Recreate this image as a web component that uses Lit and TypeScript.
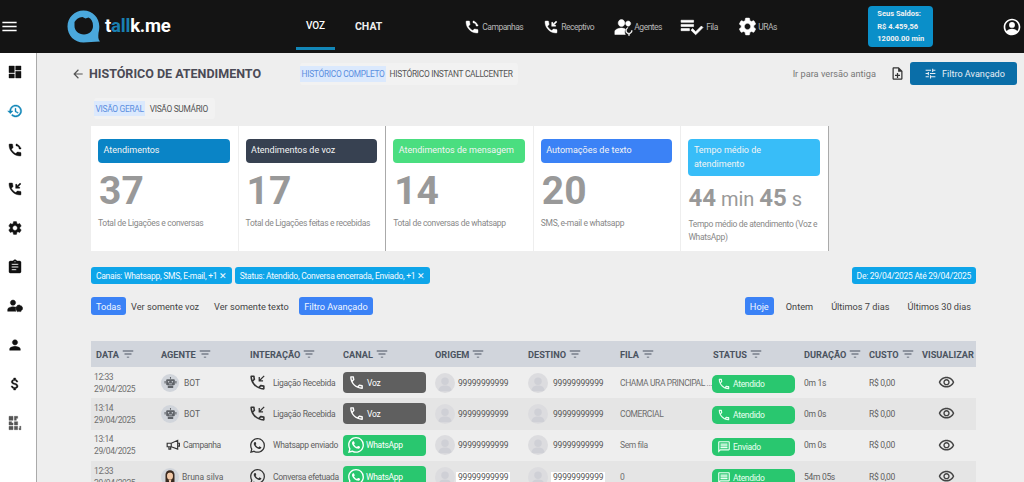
import { LitElement, html, css } from "lit";
import { customElement } from "lit/decorators.js";

const P = {
  menu: "M3 18h18v-2H3v2zm0-5h18v-2H3v2zm0-7v2h18V6H3z",
  dash: "M3 13h8V3H3v10zm0 8h8v-6H3v6zm10 0h8V11h-8v10zm0-18v6h8V3h-8z",
  hist: "M13 3c-4.97 0-9 4.03-9 9H1l3.89 3.89.07.14L9 12H6c0-3.87 3.13-7 7-7s7 3.13 7 7-3.13 7-7 7c-1.93 0-3.68-.79-4.94-2.06l-1.42 1.42C8.27 19.99 10.51 21 13 21c4.97 0 9-4.03 9-9s-4.03-9-9-9zm-1 5v5l4.28 2.54.72-1.21-3.5-2.08V8H12z",
  phoneOut: "M6.62 10.79c1.44 2.83 3.76 5.14 6.59 6.59l2.2-2.2c.27-.27.67-.36 1.02-.24 1.12.37 2.33.57 3.57.57.55 0 1 .45 1 1V20c0 .55-.45 1-1 1-9.39 0-17-7.61-17-17 0-.55.45-1 1-1h3.5c.55 0 1 .45 1 1 0 1.25.2 2.45.57 3.57.11.35.03.74-.25 1.02l-2.2 2.2z M13.5 3h2v1.2c2.3.4 4 2.1 4.3 4.3H21v2h-3v-1c0-2-1.6-3.6-3.6-3.6h-.9V3z",
  phoneIn: "M6.62 10.79c1.44 2.83 3.76 5.14 6.59 6.59l2.2-2.2c.27-.27.67-.36 1.02-.24 1.12.37 2.33.57 3.57.57.55 0 1 .45 1 1V20c0 .55-.45 1-1 1-9.39 0-17-7.61-17-17 0-.55.45-1 1-1h3.5c.55 0 1 .45 1 1 0 1.25.2 2.45.57 3.57.11.35.03.74-.25 1.02l-2.2 2.2z M21 4.41 19.59 3 15 7.59V5h-2v6h6V9h-2.59z",
  phoneLine: "M6.54 5c.06.89.21 1.76.45 2.59l-1.2 1.2c-.41-1.2-.67-2.47-.76-3.79h1.51m9.86 12.02c.85.24 1.72.39 2.6.45v1.49c-1.32-.09-2.59-.35-3.8-.75l1.2-1.19M7.5 3H4c-.55 0-1 .45-1 1 0 9.39 7.61 17 17 17 .55 0 1-.45 1-1v-3.49c0-.55-.45-1-1-1-1.24 0-2.45-.2-3.57-.57-.1-.04-.21-.05-.31-.05-.26 0-.51.1-.71.29l-2.2 2.2c-2.83-1.45-5.15-3.76-6.59-6.59l2.2-2.2c.28-.28.36-.67.25-1.02C8.7 6.45 8.5 5.25 8.5 4c0-.55-.45-1-1-1z",
  phoneLineIn: "M6.54 5c.06.89.21 1.76.45 2.59l-1.2 1.2c-.41-1.2-.67-2.47-.76-3.79h1.51m9.86 12.02c.85.24 1.72.39 2.6.45v1.49c-1.32-.09-2.59-.35-3.8-.75l1.2-1.19M7.5 3H4c-.55 0-1 .45-1 1 0 9.39 7.61 17 17 17 .55 0 1-.45 1-1v-3.49c0-.55-.45-1-1-1-1.24 0-2.45-.2-3.57-.57-.1-.04-.21-.05-.31-.05-.26 0-.51.1-.71.29l-2.2 2.2c-2.83-1.45-5.15-3.76-6.59-6.59l2.2-2.2c.28-.28.36-.67.25-1.02C8.7 6.45 8.5 5.25 8.5 4c0-.55-.45-1-1-1z M21 4.1 19.9 3 15 7.9V5h-1.6v5.6H19V9h-2.9z",
  gear: "M19.14 12.94c.04-.3.06-.61.06-.94 0-.32-.02-.64-.07-.94l2.03-1.58c.18-.14.23-.41.12-.61l-1.92-3.32c-.12-.22-.37-.29-.59-.22l-2.39.96c-.5-.38-1.03-.7-1.62-.94l-.36-2.54c-.04-.24-.24-.41-.48-.41h-3.84c-.24 0-.43.17-.47.41l-.36 2.54c-.59.24-1.13.57-1.62.94l-2.39-.96c-.22-.08-.47 0-.59.22L2.74 8.87c-.12.21-.08.47.12.61l2.03 1.58c-.05.3-.09.63-.09.94s.02.64.07.94l-2.03 1.58c-.18.14-.23.41-.12.61l1.92 3.32c.12.22.37.29.59.22l2.39-.96c.5.38 1.03.7 1.62.94l.36 2.54c.05.24.24.41.48.41h3.84c.24 0 .44-.17.47-.41l.36-2.54c.59-.24 1.13-.56 1.62-.94l2.39.96c.22.08.47 0 .59-.22l1.92-3.32c.12-.22.07-.47-.12-.61l-2.01-1.58zM12 15.6c-1.98 0-3.6-1.62-3.6-3.6s1.62-3.6 3.6-3.6 3.6 1.62 3.6 3.6-1.62 3.6-3.6 3.6z",
  clip: "M19 3h-4.18C14.4 1.84 13.3 1 12 1c-1.3 0-2.4.84-2.82 2H5c-1.1 0-2 .9-2 2v14c0 1.1.9 2 2 2h14c1.1 0 2-.9 2-2V5c0-1.1-.9-2-2-2zm-7 0c.55 0 1 .45 1 1s-.45 1-1 1-1-.45-1-1 .45-1 1-1zm2 14H7v-2h7v2zm3-4H7v-2h10v2zm0-4H7V7h10v2z",
  person: "M12 12c2.21 0 4-1.79 4-4s-1.79-4-4-4-4 1.79-4 4 1.79 4 4 4zm0 2c-2.67 0-8 1.34-8 4v2h16v-2c0-2.66-5.33-4-8-4z",
  dollar: "M11.8 10.9c-2.27-.59-3-1.2-3-2.15 0-1.09 1.01-1.85 2.7-1.85 1.78 0 2.44.85 2.5 2.1h2.21c-.07-1.72-1.12-3.3-3.21-3.81V3h-3v2.16c-1.94.42-3.5 1.68-3.5 3.61 0 2.31 1.91 3.46 4.7 4.13 2.5.6 3 1.48 3 2.41 0 .69-.49 1.79-2.7 1.79-2.06 0-2.87-.92-2.98-2.1h-2.2c.12 2.19 1.76 3.42 3.68 3.83V21h3v-2.15c1.95-.37 3.5-1.5 3.5-3.55 0-2.84-2.43-3.81-4.7-4.4z",
  agents: "M9 11.5c2.2 0 4-1.9 4-4.2S11.2 3 9 3 5 5 5 7.3s1.8 4.2 4 4.2zm0 1.8c-3 0-8 1.5-8 4.2V21h12.6c-.5-1-.8-2-.8-3.2 0-1.2.3-2.3.9-3.2-1.6-.9-3.5-1.3-4.7-1.3zM17 11c1.7 0 3-1.4 3-3.1S18.7 4.8 17 4.8 14 6.2 14 7.9 15.3 11 17 11zm-.3 1.6c-1.9.4-3 2.6-2.6 4.7.4 1.7 1.8 2.9 3.4 3v2h1v-2c2-.3 3.4-2 3.4-4h-1c0 1.7-1.3 3.1-3 3.1s-3-1.4-3-3.1 1-2.8 2-3.2z",
  people: "M9 11c2.2 0 4-1.8 4-4s-1.8-4-4-4-4 1.8-4 4 1.8 4 4 4zm0 2c-3 0-8 1.5-8 4.2V20h12.5c-.4-.9-.6-1.9-.6-3 0-1.2.3-2.3.8-3.2C12 13.3 10.3 13 9 13zm8.5-2.5a2.5 2.5 0 0 1 0 5 2.5 2.5 0 0 1 0-5zM23 17.5l-1.5.7-.3 1.8-1.7.8-1.5-.8-1.7.8-1.5-1-.5-1.8-1.2-1.2.7-1.6-.3-1.7 1.5-.8.8-1.6 1.7.2 1.5-.7 1.3 1.1 1.7.2.5 1.6 1.2 1.2z",
  fila: "M14 10H2v2h12v-2zm0-4H2v2h12V6zM2 16h8v-2H2v2zm19.5-4.5L23 13l-6.99 7-4.51-4.5L13 14l3.01 3 5.49-5.5z",
  user: "M12 2C6.48 2 2 6.48 2 12s4.48 10 10 10 10-4.48 10-10S17.52 2 12 2zm0 2c4.4 0 8 3.6 8 8 0 1.8-.6 3.5-1.7 4.9-1.4-1.9-4.3-2.9-6.3-2.9s-4.9 1-6.3 2.9C4.6 15.5 4 13.8 4 12c0-4.4 3.6-8 8-8zm0 2a3.5 3.5 0 1 0 0 7 3.5 3.5 0 0 0 0-7z",
  arrow: "M20 11H7.83l5.59-5.59L12 4l-8 8 8 8 1.41-1.41L7.83 13H20v-2z",
  noteAdd: "M14 2H6c-1.1 0-2 .9-2 2v16c0 1.1.9 2 2 2h12c1.1 0 2-.9 2-2V8l-6-6zm4 18H6V4h7v5h5v11zM11 11h2v3h3v2h-3v3h-2v-3H8v-2h3v-3z",
  tune: "M3 17v2h6v-2H3zM3 5v2h10V5H3zm10 16v-2h8v-2h-8v-2h-2v6h2zM7 9v2H3v2h4v2h2V9H7zm14 4v-2H11v2h10zm-6-4h2V7h4V5h-4V3h-2v6z",
  filter: "M10 18h4v-1.5h-4V18zM3 6v1.5h18V6H3zm3 6.7h12v-1.5H6v1.5z",
  eye: "M12 6c3.79 0 7.17 2.13 8.82 5.5C19.17 14.87 15.79 17 12 17s-7.17-2.13-8.82-5.5C4.83 8.13 8.21 6 12 6m0-2C7 4 2.73 7.11 1 11.5 2.73 15.89 7 19 12 19s9.27-3.11 11-7.5C21.27 7.11 17 4 12 4zm0 5c1.38 0 2.5 1.12 2.5 2.5S13.38 14 12 14s-2.5-1.12-2.5-2.5S10.62 9 12 9m0-2c-2.48 0-4.5 2.02-4.5 4.5S9.52 16 12 16s4.5-2.02 4.5-4.5S14.48 7 12 7z",
  chat: "M20 2H4c-1.1 0-2 .9-2 2v18l4-4h14c1.1 0 2-.9 2-2V4c0-1.1-.9-2-2-2zm0 14H5.17L4 17.17V4h16v12zM6 12h12v2H6zm0-3h12v2H6zm0-3h12v2H6z",
  wa: "M17.472 14.382c-.297-.149-1.758-.867-2.03-.967-.273-.099-.471-.148-.67.15-.197.297-.767.966-.94 1.164-.173.199-.347.223-.644.075-.297-.15-1.255-.463-2.39-1.475-.883-.788-1.48-1.761-1.653-2.059-.173-.297-.018-.458.13-.606.134-.133.298-.347.446-.52.149-.174.198-.298.298-.497.099-.198.05-.371-.025-.52-.075-.149-.669-1.612-.916-2.207-.242-.579-.487-.5-.669-.51-.173-.008-.371-.01-.57-.01-.198 0-.52.074-.792.372-.272.297-1.04 1.016-1.04 2.479 0 1.462 1.065 2.875 1.213 3.074.149.198 2.096 3.2 5.077 4.487.709.306 1.262.489 1.694.625.712.227 1.36.195 1.871.118.571-.085 1.758-.719 2.006-1.413.248-.694.248-1.289.173-1.413-.074-.124-.272-.198-.57-.347m-5.421 7.403h-.004a9.87 9.87 0 01-5.031-1.378l-.361-.214-3.741.982.998-3.648-.235-.374a9.86 9.86 0 01-1.51-5.26c.001-5.45 4.436-9.884 9.888-9.884 2.64 0 5.122 1.03 6.988 2.898a9.825 9.825 0 012.893 6.994c-.003 5.45-4.437 9.884-9.885 9.884m8.413-18.297A11.815 11.815 0 0012.05 0C5.495 0 .16 5.335.157 11.892c0 2.096.547 4.142 1.588 5.945L.057 24l6.305-1.654a11.882 11.882 0 005.683 1.448h.005c6.554 0 11.89-5.335 11.893-11.893a11.821 11.821 0 00-3.48-8.413z",
  qr: "M3 2h6v6H3zM11 2h5v3h-2v3h-3zM3 10h4v2h2v3H3zM11 10h5v5h-5zM3 17h6v5H3zM11 17h5v5h-5zM19 17h2v2h-2zM18 20h3v2h-3z",
};

const ico = (d: string, size: number, cls = "") =>
  html`<svg class="ico ${cls}" width=${size} height=${size} viewBox="0 0 24 24" fill="currentColor"><path d=${d}></path></svg>`;

const robot = html`<svg class="glyph" width="13" height="13" viewBox="0 0 24 24" fill="#5f6368"><path d="M11 2h2v3h-2zM6 6h12a2 2 0 0 1 2 2v7a2 2 0 0 1-2 2H6a2 2 0 0 1-2-2V8a2 2 0 0 1 2-2zm2.500 3a1.500 1.500 0 1 0 0 3 1.500 1.500 0 0 0 0-3zm7 0a1.500 1.500 0 1 0 0 3 1.500 1.500 0 0 0 0-3zM9 14v1h6v-1zM1 9h2v5H1zM21 9h2v5h-2zM7 18h10v4H7z"></path></svg>`;

const silhouette = html`<svg class="glyph" width="20" height="20" viewBox="0 0 24 24" fill="#cfd0d6"><circle cx="12" cy="10" r="4.500"></circle><path d="M4 22c0-5 3.500-7 8-7s8 2 8 7z"></path></svg>`;

const woman = html`<svg class="glyph" width="18" height="18" viewBox="0 0 24 24"><path d="M6 24V9a6 6 0 0 1 12 0v15z" fill="#3b2a20"></path><ellipse cx="12" cy="10.500" rx="4" ry="5" fill="#f2c9a8"></ellipse><path d="M8 8c2-2.500 6-2.500 8 0V5H8z" fill="#3b2a20"></path><path d="M7 24c0-5 2-7 5-7s5 2 5 7z" fill="#111"></path><path d="M10.500 16h3v3h-3z" fill="#f2c9a8"></path></svg>`;

const megaphone = html`<svg class="glyph" width="14" height="14" viewBox="0 0 24 24" fill="none" stroke="#333" stroke-width="2"><path d="M2 9h7l11-5v15L9 15H2zM9 9v6M5 15v4h3v-4M20 9h3v5h-3"></path></svg>`;

const sideIcons = [P.dash, P.hist, P.phoneOut, P.phoneIn, P.gear, P.clip, P.people, P.person, P.dollar, P.qr];

const navItems = [
  { d: P.phoneOut, size: 16, label: "Campanhas" },
  { d: P.phoneIn, size: 16, label: "Receptivo" },
  { d: P.agents, size: 20, label: "Agentes" },
  { d: P.fila, size: 25, label: "Fila" },
  { d: P.gear, size: 21, label: "URAs" },
];

const cards = [
  { tone: "c1", title: "Atendimentos", n: "37", desc: "Total de Ligações e conversas" },
  { tone: "c2", title: "Atendimentos de voz", n: "17", desc: "Total de Ligações feitas e recebidas", strong: true },
  { tone: "c3", title: "Atendimentos de mensagem", n: "14", desc: "Total de conversas de whatsapp" },
  { tone: "c4", title: "Automações de texto", n: "20", desc: "SMS, e-mail e whatsapp" },
];

const heads = ["DATA", "AGENTE", "INTERAÇÃO", "CANAL", "ORIGEM", "DESTINO", "FILA", "STATUS", "DURAÇÃO", "CUSTO", "VISUALIZAR"];

const rows = [
  { time: "12:33", agent: "BOT", av: "bot", icon: P.phoneLineIn, line: true, inter: "Ligação Recebida", ch: "voz", fila: "CHAMA URA PRINCIPAL ...", st: "Atendido", stIcon: P.phoneLine, dur: "0m 1s" },
  { time: "13:14", agent: "BOT", av: "bot", icon: P.phoneLineIn, line: true, inter: "Ligação Recebida", ch: "voz", fila: "COMERCIAL", st: "Atendido", stIcon: P.phoneLine, dur: "0m 0s" },
  { time: "13:14", agent: "Campanha", av: "mega", icon: P.wa, inter: "Whatsapp enviado", ch: "wa", fila: "Sem fila", st: "Enviado", stIcon: P.chat, dur: "0m 0s" },
  { time: "12:33", agent: "Bruna silva", av: "woman", icon: P.wa, inter: "Conversa efetuada", ch: "wa", fila: "0", st: "Atendido", stIcon: P.chat, dur: "54m 05s", mark: true },
];

@customElement("app-root")
export class AppRoot extends LitElement {
  static styles = css`
    :host { display: block; width: 1024px; height: 482px; overflow: hidden; background: #eeeeee; font-family: Roboto, "Liberation Sans", sans-serif; color: #444; }
    .ico { display: block; flex: none; }
    header { height: 53px; box-sizing: border-box; background: #141414; color: #fff; display: flex; align-items: center; }
    .burger { width: 67px; flex: none; }
    .logo { width: 229px; flex: none; display: flex; align-items: center; gap: 4px; }
    .wordmark { font-size: 18.500px; font-weight: 700; letter-spacing: -0.2px; color: #fff; padding-bottom: 1px; }
    .wordmark span { color: #1a7fb0; }
    .tab { align-self: stretch; display: flex; align-items: center; justify-content: center; font-size: 10px; font-weight: 500; box-sizing: border-box; }
    .tab.voz { width: 39px; margin-bottom: 3px; padding-top: 3px; border-bottom: 3px solid #1287b8; }
    .tab.chat { margin-left: 20px; font-weight: 700; font-size: 10.500px; color: #eee; padding-bottom: 1px; }
    .nav { margin-left: 82px; display: grid; grid-template-columns: 79px 71px 65px 58px 39px; }
    .nav div { display: flex; align-items: center; gap: 2px; font-size: 8.500px; letter-spacing: -0.5px; color: #b8b8b8; }
    .nav .ico { color: #fff; }
    .nav .ico path, aside .ico path { stroke: currentColor; stroke-width: 0.6; }
    .nav .i2, .nav .i4 { gap: 0; }
    .balance { margin-left: 92px; width: 65px; height: 41px; box-sizing: border-box; background: #0a8fc9; border-radius: 4px; padding: 2px 0 0 9px; font-size: 7.500px; font-weight: 700; line-height: 12.500px; color: #f2f2f2; }
    .user { margin-left: auto; padding-right: 2px; }
    .body { display: flex; height: 429px; }
    aside { width: 37px; box-sizing: border-box; flex: none; background: #fff; border-right: 1px solid #aaa; display: flex; flex-direction: column; padding: 11px 0 0 7px; gap: 23px; color: #111; }
    aside .on { color: #1287b8; }
    aside .qr { color: #555; }
    main { flex: 1; min-width: 0; }
    .toolbar { display: flex; align-items: center; height: 23px; margin: 9px 7px 0 34px; }
    .toolbar .back { color: #555; }
    h1 { margin: 0 0 0 4px; font-size: 12.500px; font-weight: 700; color: #4a4a55; white-space: nowrap; }
    .seg { display: flex; background: #f2f2f2; border-radius: 3px; font-size: 8.400px; letter-spacing: -0.3px; color: #555; white-space: nowrap; }
    .seg span { display: flex; align-items: center; padding: 0 1.500px; }
    .seg .sel { background: #dbe9fd; color: #5b8fe0; margin: 3px 0; }
    .top-seg { margin-left: 39px; height: 22px; gap: 2px; padding-right: 4px; }
    .spacer { flex: 1; }
    .old { font-size: 9.200px; color: #777; margin-right: 14px; white-space: nowrap; }
    .file { color: #333; margin-right: 5px; }
    .adv { width: 107px; height: 23px; box-sizing: border-box; background: #0a6ea8; border-radius: 3px; color: #e8eef5; display: flex; align-items: center; gap: 5px; padding-left: 14px; font-size: 9.100px; white-space: nowrap; }
    .sub-seg { margin: 13px 0 0 57px; width: max-content; height: 21px; gap: 3px; padding-right: 5px; }
    .cards { margin: 7px 0 0 54px; width: 738px; height: 125px; background: #fff; display: grid; grid-template-columns: repeat(5, 1fr); }
    .card { box-sizing: border-box; padding: 13px 8px 0 7px; border-right: 1px solid #eeeeee; }
    .card.strong, .card:last-child { border-right-color: #aaa; }
    .pill { height: 24px; box-sizing: border-box; border-radius: 4px; color: #f4f4f4; font-size: 9px; line-height: 13.500px; padding: 5px 5.500px; white-space: nowrap; }
    .c1 { background: #0a84c6; } .c2 { background: #374151; } .c3 { background: #4ade80; } .c4 { background: #3b82f6; } .c5 { background: #38bdf8; }
    .pill.c5 { height: 37px; }
    .num { font-size: 39px; font-weight: 700; color: #999; line-height: 44px; margin-top: 6px; padding-left: 1px; }
    .dur { font-size: 24px; color: #999; line-height: 32px; margin-top: 6px; white-space: nowrap; word-spacing: -1px; }
    .dur b { font-weight: 700; } .dur i { font-style: normal; font-size: 20px; }
    .desc { font-size: 8.500px; letter-spacing: -0.31px; color: #888; line-height: 13px; margin-top: 4px; }
    .dur + .desc { margin-top: 3px; }
    .chips { display: flex; gap: 3px; margin: 16px 48px 0 54px; height: 17px; }
    .chip { background: #0ea5e9; color: #f4fbff; font-size: 8.500px; letter-spacing: -0.27px; border-radius: 3px; display: flex; align-items: center; padding: 0 5px; white-space: nowrap; }
    .chip.range { margin-left: auto; letter-spacing: -0.25px; }
    .filters { display: flex; align-items: center; margin: 13px 48px 0 54px; height: 18px; font-size: 9.200px; color: #444; white-space: nowrap; }
    .btn { background: #3b82f6; color: #f2f6ff; border-radius: 3px; height: 18px; display: flex; align-items: center; justify-content: center; box-sizing: border-box; }
    .b-all { width: 35px; margin-right: 5px; } .b-voz { width: 83px; } .b-txt { width: 85px; }
    .b-adv { width: 74px; }
    .f-txt { display: flex; align-items: center; }
    .b-hoje { width: 29px; margin-left: auto; margin-right: 12px; }
    .f-r1 { margin-right: 18px; } .f-r2 { margin-right: 18px; } .f-r3 { margin-right: 5px; }
    .table { margin: 26px 0 0 54px; width: 885px; }
    .tr { display: grid; grid-template-columns: 65px 89px 93px 92px 93px 92px 93px 91px 65px 53px 59px; align-items: center; height: 31.330px; font-size: 8.500px; letter-spacing: -0.3px; color: #606060; }
    .tr > div { box-sizing: border-box; padding-left: 5px; min-width: 0; white-space: nowrap; }
    .tr.th { height: 26px; background: #d1d5dc; font-size: 9.200px; letter-spacing: 0; font-weight: 700; color: #4b5360; }
    .tr.th > div { display: flex; align-items: center; gap: 2px; }
    .tr.alt { background: #e5e5e5; }
    .tr > .stamp { padding-left: 3px; line-height: 12px; letter-spacing: -0.4px; color: #6e6e6e; }
    .agent, .inter, .party { display: flex; align-items: center; }
    .avatar { width: 18px; height: 18px; border-radius: 50%; background: #d1d5db; display: flex; align-items: center; justify-content: center; overflow: hidden; flex: none; }
    .avatar.p { width: 20px; height: 20px; background: #dcdcdf; }
    .agent .nm { margin-left: 5px; letter-spacing: 0; }
    .tr > .mega { padding-left: 10px; }
    .mega .nm, .woman .nm { margin-left: 3px; }
    .mega .nm { letter-spacing: -0.4px; }
    .inter { gap: 8px; }
    .inter .ico { color: #333; }
    .ibox { width: 15px; display: flex; justify-content: center; flex: none; }
    .ibox .big { margin: 0 -2px; }
    .ch { width: 83px; height: 21px; border-radius: 4px; display: flex; align-items: center; color: #fff; padding-left: 5px; box-sizing: border-box; gap: 2px; }
    .ch.voz { background: #5f5f5f; }
    .ch.wa { background: #29c76f; }
    .party { gap: 3px; letter-spacing: -0.2px; color: #555; }
    .party.d { gap: 5px; }
    .mark .party .mk { background: #fff; padding: 0 2px; margin-left: -2px; }
    .tr > .fila { color: #6e6e6e; letter-spacing: -0.4px; }
    .st { width: 83px; height: 18px; margin-top: 3px; margin-left: -1px; border-radius: 5px; background: #29c76f; color: #eafff2; display: flex; align-items: center; gap: 2px; padding-left: 5px; box-sizing: border-box; }
    .tr > .eye { display: flex; justify-content: center; color: #444; padding-left: 0; }
  `;

  private avatar(kind: string) {
    if (kind === "bot") return html`<span class="avatar">${robot}</span>`;
    if (kind === "mega") return megaphone;
    return html`<span class="avatar">${woman}</span>`;
  }

  render() {
    return html`
      <header>
        <div class="burger">${ico(P.menu, 19)}</div>
        <div class="logo">
          <svg width="34" height="33" viewBox="0 0 34 33">
            <path d="M16.500 0.500C7.500 0.500 0.500 7.500 0.500 16.500S7.500 32.500 16.500 32.500c5 0 10-1 16.500-1-2-2-1.800-5-1.500-8.500.5-2 .8-4 .8-6.500C32.300 7.500 25.500.5 16.500.5z" fill="#4aa8dc"></path>
            <path d="M7.500 12c2-3 4-4.500 8-5l3 1.500 3-1c3 1.500 4.500 4 4.500 8.500s-3.500 8.500-9 8.500-9.500-4-9.500-8.500z" fill="#141414"></path>
          </svg>
          <span class="wordmark">t<span>all</span>k.me</span>
        </div>
        <div class="tab voz">VOZ</div>
        <div class="tab chat">CHAT</div>
        <div class="nav">
          ${navItems.map((n, i) => html`<div class="i${i}">${ico(n.d, n.size)}<span>${n.label}</span></div>`)}
        </div>
        <div class="balance">Seus Saldos:<br />R$ 4.459,56<br />12000.00 min</div>
        <div class="user">${ico(P.user, 20)}</div>
      </header>
      <div class="body">
        <aside>
          ${sideIcons.map((d, i) => ico(d, 16, i === 1 ? "on" : i === 9 ? "qr" : ""))}
        </aside>
        <main>
          <div class="toolbar">
            <span class="back">${ico(P.arrow, 14)}</span>
            <h1>HISTÓRICO DE ATENDIMENTO</h1>
            <div class="seg top-seg"><span class="sel">HISTÓRICO COMPLETO</span><span>HISTÓRICO INSTANT CALLCENTER</span></div>
            <div class="spacer"></div>
            <span class="old">Ir para versão antiga</span>
            <span class="file">${ico(P.noteAdd, 15)}</span>
            <div class="adv">${ico(P.tune, 13)}<span>Filtro Avançado</span></div>
          </div>
          <div class="seg sub-seg"><span class="sel">VISÃO GERAL</span><span>VISÃO SUMÁRIO</span></div>
          <div class="cards">
            ${cards.map((c) => html`
              <div class="card ${c.strong ? "strong" : ""}">
                <div class="pill ${c.tone}">${c.title}</div>
                <div class="num">${c.n}</div>
                <div class="desc">${c.desc}</div>
              </div>`)}
            <div class="card">
              <div class="pill c5">Tempo médio de<br />atendimento</div>
              <div class="dur"><b>44</b> <i>min</i> <b>45</b> <i>s</i></div>
              <div class="desc">Tempo médio de atendimento (Voz e WhatsApp)</div>
            </div>
          </div>
          <div class="chips">
            <div class="chip">Canais: Whatsapp, SMS, E-mail, +1 ✕</div>
            <div class="chip">Status: Atendido, Conversa encerrada, Enviado, +1 ✕</div>
            <div class="chip range">De: 29/04/2025 Até 29/04/2025</div>
          </div>
          <div class="filters">
            <div class="btn b-all">Todas</div>
            <div class="f-txt b-voz">Ver somente voz</div>
            <div class="f-txt b-txt">Ver somente texto</div>
            <div class="btn b-adv">Filtro Avançado</div>
            <div class="btn b-hoje">Hoje</div>
            <div class="f-r1">Ontem</div>
            <div class="f-r2">Últimos 7 dias</div>
            <div class="f-r3">Últimos 30 dias</div>
          </div>
          <div class="table">
            <div class="tr th">
              ${heads.map((h, i) => html`<div>${h}${i < 10 ? ico(P.filter, 14) : ""}</div>`)}
            </div>
            ${rows.map((r, i) => html`
              <div class="tr ${i % 2 ? "alt" : ""} ${r.mark ? "mark" : ""}">
                <div class="stamp">${r.time}<br />29/04/2025</div>
                <div class="agent ${r.av}">${this.avatar(r.av)}<span class="nm">${r.agent}</span></div>
                <div class="inter"><span class="ibox">${r.line ? ico(r.icon, 19, "big") : ico(r.icon, 15)}</span><span>${r.inter}</span></div>
                <div>
                  ${r.ch === "voz"
                    ? html`<div class="ch voz">${ico(P.phoneLine, 17)}<span>Voz</span></div>`
                    : html`<div class="ch wa">${ico(P.wa, 16)}<span>WhatsApp</span></div>`}
                </div>
                <div class="party"><span class="avatar p">${silhouette}</span><span class="mk">99999999999</span></div>
                <div class="party d"><span class="avatar p">${silhouette}</span><span class="mk">99999999999</span></div>
                <div class="fila">${r.fila}</div>
                <div><div class="st">${ico(r.stIcon, 14)}<span>${r.st}</span></div></div>
                <div>${r.dur}</div>
                <div>R$ 0,00</div>
                <div class="eye">${ico(P.eye, 17)}</div>
              </div>`)}
          </div>
        </main>
      </div>
    `;
  }
}
